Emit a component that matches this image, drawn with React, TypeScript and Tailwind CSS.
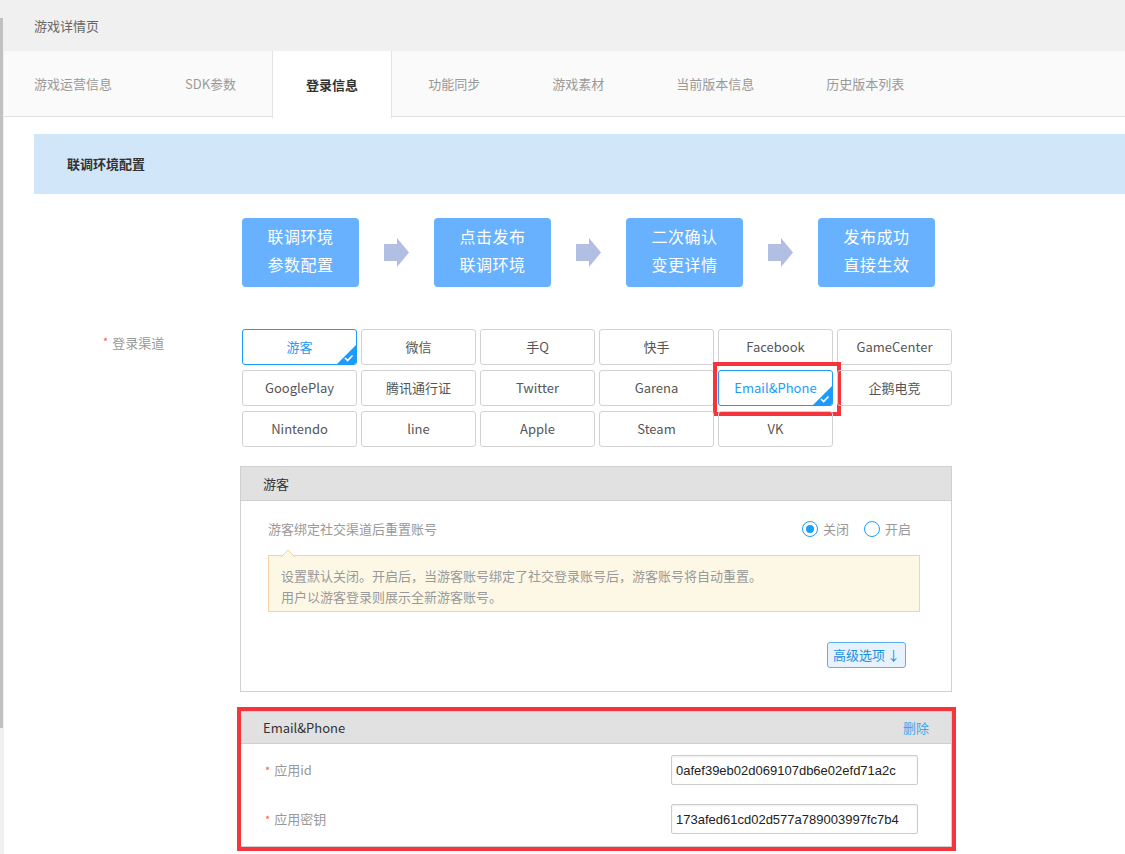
import React from 'react';

const tabs = ['游戏运营信息', 'SDK参数', '登录信息', '功能同步', '游戏素材', '当前版本信息', '历史版本列表'];

const steps = [
  ['联调环境', '参数配置'],
  ['点击发布', '联调环境'],
  ['二次确认', '变更详情'],
  ['发布成功', '直接生效'],
];

const grid = [
  ['游客', '微信', '手Q', '快手', 'Facebook', 'GameCenter'],
  ['GooglePlay', '腾讯通行证', 'Twitter', 'Garena', 'Email&Phone', '企鹅电竞'],
  ['Nintendo', 'line', 'Apple', 'Steam', 'VK'],
];

const selected = ['游客', 'Email&Phone'];

const Arrow = () => (
  <svg width="25" height="29" viewBox="0 0 25 29" className="mx-[25px] shrink-0">
    <rect x="0" y="6" width="14" height="17" fill="#b2bee2" />
    <path d="M13 0 L25 14.5 L13 29 Z" fill="#b2bee2" />
  </svg>
);

const Check = () => (
  <svg width="19" height="19" viewBox="0 0 19 19" className="absolute right-0 bottom-0">
    <path d="M19 0 V19 H0 Z" fill="#1b9cfc" />
    <path d="M8 13 L10.6 15.5 L15.5 10.5" stroke="#fff" strokeWidth="1.7" fill="none" />
  </svg>
);

const Radio = ({ on, label }: { on: boolean; label: string }) => (
  <div className="flex items-center">
    <span className="w-[16px] h-[16px] rounded-full border-[1.5px] border-[#1a9ffb] flex items-center justify-center">
      {on && <span className="w-[8px] h-[8px] rounded-full bg-[#1a9ffb]" />}
    </span>
    <span className="ml-[5px] text-[13px] text-[#999]">{label}</span>
  </div>
);

const Req = () => <span className="text-[#f5603a] text-[11px] mr-[4px]">*</span>;

const App = () => {
  return (
    <div className="flex min-h-screen bg-white font-['Noto_Sans_CJK_SC','Noto_Sans',sans-serif] overflow-hidden">
      {/* side strip */}
      <div className="w-[4px] shrink-0 bg-[#f0f0f0] pt-[18px]">
        <div className="h-[710px] w-[3px] bg-[#c1c1c1]" />
      </div>

      <div className="flex-1 min-w-0">
        {/* header */}
        <div className="h-[51px] bg-[#f0f0f0] flex items-center pl-[30px] text-[13px] text-[#666]">游戏详情页</div>

        {/* tabs */}
        <div className="h-[66px] bg-[#fafafa] border-b border-[#e0e0e0] flex">
          {tabs.map((t, i) =>
            t === '登录信息' ? (
              <div
                key={t}
                className="h-[67px] -mb-px bg-white border-x border-[#e3e3e3] px-[33px] flex items-center text-[13px] font-bold text-[#333]"
              >
                {t}
              </div>
            ) : (
              <div
                key={t}
                className={`${i === 0 ? 'pl-[30px] pr-[37px]' : 'px-[36px]'} flex items-center text-[13px] text-[#999]`}
              >
                {t}
              </div>
            )
          )}
        </div>

        <div className="pl-[30px] pb-[40px]">
          {/* banner */}
          <div className="mt-[17px] h-[60px] bg-[#d2e6f9] pl-[33px] flex items-center text-[13px] font-bold text-[#333]">
            联调环境配置
          </div>

          {/* steps */}
          <div className="mt-[24px] ml-[208px] flex items-center">
            {steps.map((s, i) => (
              <React.Fragment key={i}>
                {i > 0 && <Arrow />}
                <div className="w-[117px] h-[69px] pb-[6px] rounded-[4px] bg-[#67b1fe] flex flex-col items-center justify-center text-white text-[16px] leading-[28px] tracking-[0.5px]">
                  <span>{s[0]}</span>
                  <span>{s[1]}</span>
                </div>
              </React.Fragment>
            ))}
          </div>

          {/* login channels */}
          <div className="mt-[42px] flex">
            <div className="w-[208px] shrink-0 pl-[69px] pt-[4px] text-[13px] text-[#999] flex items-start">
              <Req />
              登录渠道
            </div>
            <div className="grid grid-cols-[repeat(6,115px)] gap-x-[4px] gap-y-[5px]">
              {grid.flat().map((c) => {
                const on = selected.includes(c);
                return (
                  <div key={c} className="relative">
                    <div
                      className={`relative h-[36px] rounded-[3px] overflow-hidden border flex items-center justify-center text-[13px] ${
                        on ? 'border-[#1b9cfc] text-[#1b9cfc]' : 'border-[#d2d2d2] text-[#555]'
                      }`}
                    >
                      {c}
                      {on && <Check />}
                    </div>
                    {c === 'Email&Phone' && (
                      <div className="absolute -left-[5px] -right-[8px] -top-[8px] -bottom-[10px] border-4 border-[#f4353b] pointer-events-none" />
                    )}
                  </div>
                );
              })}
            </div>
          </div>

          {/* guest panel */}
          <div className="mt-[19px] ml-[206px] w-[712px] border border-[#d0d0d0]">
            <div className="h-[34px] bg-[#e1e1e1] border-b border-[#cfcfcf] pl-[22px] flex items-center text-[13px] text-[#333]">
              游客
            </div>
            <div className="pt-[16px] pb-[23px]">
              <div className="h-[24px] pl-[27px] pr-[40px] flex items-center justify-between">
                <span className="text-[13px] text-[#999]">游客绑定社交渠道后重置账号</span>
                <div className="flex items-center gap-[15px]">
                  <Radio on label="关闭" />
                  <Radio on={false} label="开启" />
                </div>
              </div>
              <div className="relative mt-[14px] ml-[27px] mr-[31px] bg-[#fdf8e6] border border-[#f3d4a3] pl-[12px] pt-[9px] pb-[4px] text-[13px] leading-[21px] text-[#999]">
                <svg width="14" height="8" viewBox="0 0 14 8" className="absolute -top-[7px] left-[12px]">
                  <path d="M0 8 L7 1 L14 8" fill="#fdf8e6" stroke="#f3d4a3" strokeWidth="1" />
                </svg>
                <p>设置默认关闭。开启后，当游客账号绑定了社交登录账号后，游客账号将自动重置。</p>
                <p>用户以游客登录则展示全新游客账号。</p>
              </div>
              <div className="mt-[30px] pr-[45px] flex justify-end">
                <button className="h-[26px] px-[5px] rounded-[3px] border border-[#5aaff0] bg-[#e7f2fc] text-[#1c8fe0] text-[13px] flex items-center">
                  高级选项<span className="ml-[2px]">↓</span>
                </button>
              </div>
            </div>
          </div>

          {/* email & phone panel */}
          <div className="relative mt-[19px] ml-[206px] w-[712px] border border-[#d0d0d0]">
            <div className="h-[32px] bg-[#e1e1e1] border-b border-[#cfcfcf] pl-[22px] pr-[22px] flex items-center justify-between text-[13px]">
              <span className="text-[#333]">Email&amp;Phone</span>
              <span className="text-[#36a8f0]">删除</span>
            </div>
            <div className="pt-[11px] pb-[12px] pl-[24px] pr-[33px] flex flex-col gap-[19px]">
              {[
                ['应用id', '0afef39eb02d069107db6e02efd71a2c'],
                ['应用密钥', '173afed61cd02d577a789003997fc7b4'],
              ].map(([k, v]) => (
                <div key={k} className="h-[30px] flex items-center justify-between">
                  <span className="text-[13px] text-[#999] flex items-center">
                    <Req />
                    {k}
                  </span>
                  <input
                    readOnly
                    defaultValue={v}
                    className="w-[247px] h-[30px] border border-[#ccc] rounded-[2px] px-[4px] text-[13px] text-[#222] font-['Liberation_Sans',Arial,sans-serif] shadow-[inset_0_1px_2px_rgba(0,0,0,0.08)] outline-none"
                  />
                </div>
              ))}
            </div>
            <div className="absolute -left-[4px] -right-[5px] -top-[5px] -bottom-[5px] border-4 border-[#f4353b] pointer-events-none" />
          </div>
        </div>
      </div>
    </div>
  );
};

export default App;
